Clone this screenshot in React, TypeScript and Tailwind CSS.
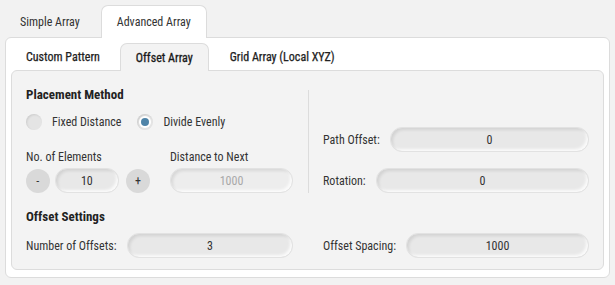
import React from 'react'

// --- shared bits ---
const FONT = { fontFamily: "'Roboto Condensed', 'Liberation Sans Narrow', 'DejaVu Sans Condensed', Roboto, sans-serif" }

const inputCls =
  'flex h-[25px] items-center justify-center rounded-[12px] border border-[#e2e2e2] bg-[#e8e8e8] text-[12px] text-[#333] shadow-[inset_2px_2px_3px_rgba(0,0,0,0.09),inset_-2px_-2px_3px_rgba(255,255,255,0.8)]'

function Field({ value, className, disabled }: { value: string; className?: string; disabled?: boolean }) {
  return (
    <div className={`${inputCls} ${disabled ? 'bg-[#ededed] text-[#a8a8a8]' : ''} ${className ?? ''}`}>{value}</div>
  )
}

function Row({ label, labelW, value }: { label: string; labelW: string; value: string }) {
  return (
    <div className="flex items-center">
      <span className={`${labelW} shrink-0 text-[12px] text-[#333]`}>{label}</span>
      <Field value={value} className="flex-1" />
    </div>
  )
}

function Radio({ label, checked }: { label: string; checked?: boolean }) {
  return (
    <div className="flex items-center gap-[10px]">
      <span className="flex h-[16px] w-[16px] items-center justify-center rounded-full bg-[#e4e4e4] shadow-[inset_1px_1px_2px_rgba(0,0,0,0.1)]">
        {checked && <span className="h-[8px] w-[8px] rounded-full bg-[#4f84a8] ring-2 ring-white" />}
      </span>
      <span className="text-[12px] text-[#333]">{label}</span>
    </div>
  )
}

function StepBtn({ children }: { children: React.ReactNode }) {
  return (
    <span className="flex h-[24px] w-[24px] items-center justify-center rounded-full bg-[#d9d9d9] text-[12px] text-[#333]">
      {children}
    </span>
  )
}

export default function App() {
  return (
    <div className="h-[285px] w-[615px] bg-[#f2f2f2] px-[5px] pt-[5px]" style={FONT}>
      {/* outer tabs */}
      <div className="relative z-10 flex h-[33px] items-stretch">
        <div className="flex items-center px-[15px] text-[12px] text-[#333]">Simple Array</div>
        <div className="ml-[6px] flex items-center rounded-t-[7px] border border-b-0 border-[#dcdcdc] bg-white px-[15px] pb-[1px] text-[12px] text-[#333]">
          Advanced Array
        </div>
      </div>

      {/* outer panel */}
      <div className="-mt-px h-[241px] rounded-[6px] border border-[#dcdcdc] bg-white px-[5px] pt-[5px]">
        {/* inner tabs */}
        <div className="relative z-10 flex h-[28px] items-stretch">
          <div className="flex items-center px-[15px] text-[12px] text-[#222] [-webkit-text-stroke:0.25px_#222]">Custom Pattern</div>
          <div className="ml-[5px] flex items-center rounded-t-[7px] border border-b-0 border-[#dcdcdc] bg-[#f3f3f3] px-[15px] text-[12px] text-[#1a1a1a] [-webkit-text-stroke:0.3px_#1a1a1a]">
            Offset Array
          </div>
          <div className="flex items-center px-[21px] text-[12px] text-[#222] [-webkit-text-stroke:0.25px_#222]">Grid Array (Local XYZ)</div>
        </div>

        {/* inner panel */}
        <div className="-mt-px h-[200px] rounded-[6px] border border-[#dcdcdc] bg-[#f3f3f3] px-[14px] pt-[15px]">
          <div className="grid grid-cols-[267px_1fr] gap-x-[15px]">
            {/* left: placement */}
            <div>
              <div className="h-[18px] text-[13px] leading-[18px] font-bold text-[#222]">Placement Method</div>
              <div className="mt-[10px] flex h-[16px] items-center gap-[16px]">
                <Radio label="Fixed Distance" />
                <Radio label="Divide Evenly" checked />
              </div>
              <div className="mt-[19px] grid grid-cols-[124px_1fr] gap-x-[20px]">
                <div className="h-[16px] text-[12px] leading-[16px] text-[#333]">No. of Elements</div>
                <div className="h-[16px] text-[12px] leading-[16px] text-[#333]">Distance to Next</div>
                <div className="mt-[3px] flex items-center gap-[5px]">
                  <StepBtn>-</StepBtn>
                  <Field value="10" className="h-[24px] w-[65px]" />
                  <span className="ml-[2px]">
                    <StepBtn>+</StepBtn>
                  </span>
                </div>
                <Field value="1000" disabled className="mt-[3px] h-[24px]" />
              </div>
            </div>

            {/* right: offsets */}
            <div className="mt-[4px] flex flex-col justify-end gap-[16px] border-l border-[#dcdcdc] pl-[14px]">
              <Row label="Path Offset:" labelW="w-[67px]" value="0" />
              <Row label="Rotation:" labelW="w-[53px]" value="0" />
            </div>
          </div>

          {/* offset settings */}
          <div className="mt-[15px] h-[18px] text-[13px] leading-[18px] font-bold text-[#222]">Offset Settings</div>
          <div className="mt-[7px] grid grid-cols-[267px_1fr] gap-x-[30px]">
            <Row label="Number of Offsets:" labelW="w-[101px]" value="3" />
            <Row label="Offset Spacing:" labelW="w-[83px]" value="1000" />
          </div>
        </div>
      </div>
    </div>
  )
}
